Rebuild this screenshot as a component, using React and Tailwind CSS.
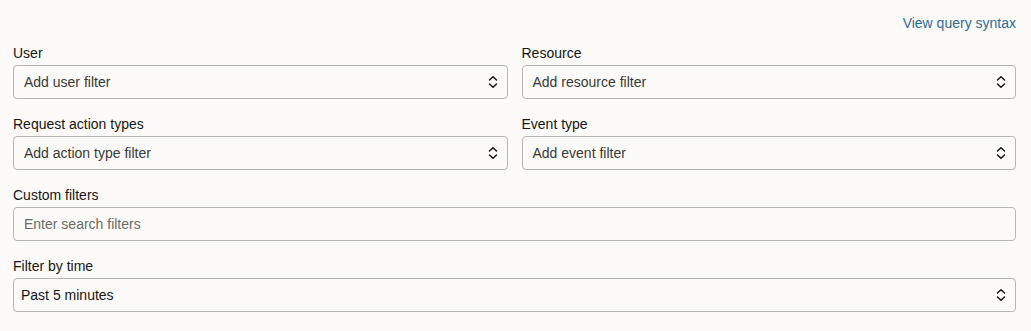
import React from "react";

function Chevrons() {
  return (
    <svg width="10" height="14" viewBox="0 0 10 14" fill="none" className="shrink-0">
      <path d="M1.5 5 L5 1.8 L8.5 5" stroke="#161513" strokeWidth="1.5" strokeLinecap="round" strokeLinejoin="round" />
      <path d="M1.5 9 L5 12.2 L8.5 9" stroke="#161513" strokeWidth="1.5" strokeLinecap="round" strokeLinejoin="round" />
    </svg>
  );
}

function SelectField({ label, value, placeholder, padLeft = "pl-[10px]", valueColor = "text-[#3a3835]" }) {
  return (
    <div className="flex flex-col min-w-0">
      <div className="text-[14px] leading-[18px] text-[#161513] mb-[3px]">{label}</div>
      <div className={`h-[34px] border border-[#b9b5b0] rounded-[4px] bg-[#fcfbfa] flex items-center justify-between ${padLeft} pr-[9px]`}>
        <span className={`text-[14px] ${valueColor}`}>{value || placeholder}</span>
        <Chevrons />
      </div>
    </div>
  );
}

export default function App() {
  return (
    <div className="w-[1031px] h-[331px] bg-[#fcfbfa] pl-[13px] pr-[15px] pt-[14px]" style={{ fontFamily: '"Liberation Sans", Arial, sans-serif' }}>
      <div className="flex justify-end">
        <a className="text-[14px] leading-[18px] text-[#2d6b97]">View query syntax</a>
      </div>
      <div className="mt-[12px] flex flex-col gap-[16px]">
        <div className="grid grid-cols-2 gap-x-[14px]">
          <SelectField label="User" placeholder="Add user filter" />
          <SelectField label="Resource" placeholder="Add resource filter" />
        </div>
        <div className="grid grid-cols-2 gap-x-[14px]">
          <SelectField label="Request action types" placeholder="Add action type filter" />
          <SelectField label="Event type" placeholder="Add event filter" />
        </div>
        <div className="flex flex-col">
          <div className="text-[14px] leading-[18px] text-[#161513] mb-[3px]">Custom filters</div>
          <div className="h-[34px] border border-[#b9b5b0] rounded-[4px] bg-[#fcfbfa] flex items-center pl-[10px]">
            <span className="text-[14px] text-[#6b6966]">Enter search filters</span>
          </div>
        </div>
        <SelectField label="Filter by time" value="Past 5 minutes" padLeft="pl-[7px]" valueColor="text-[#161513]" />
      </div>
    </div>
  );
}
